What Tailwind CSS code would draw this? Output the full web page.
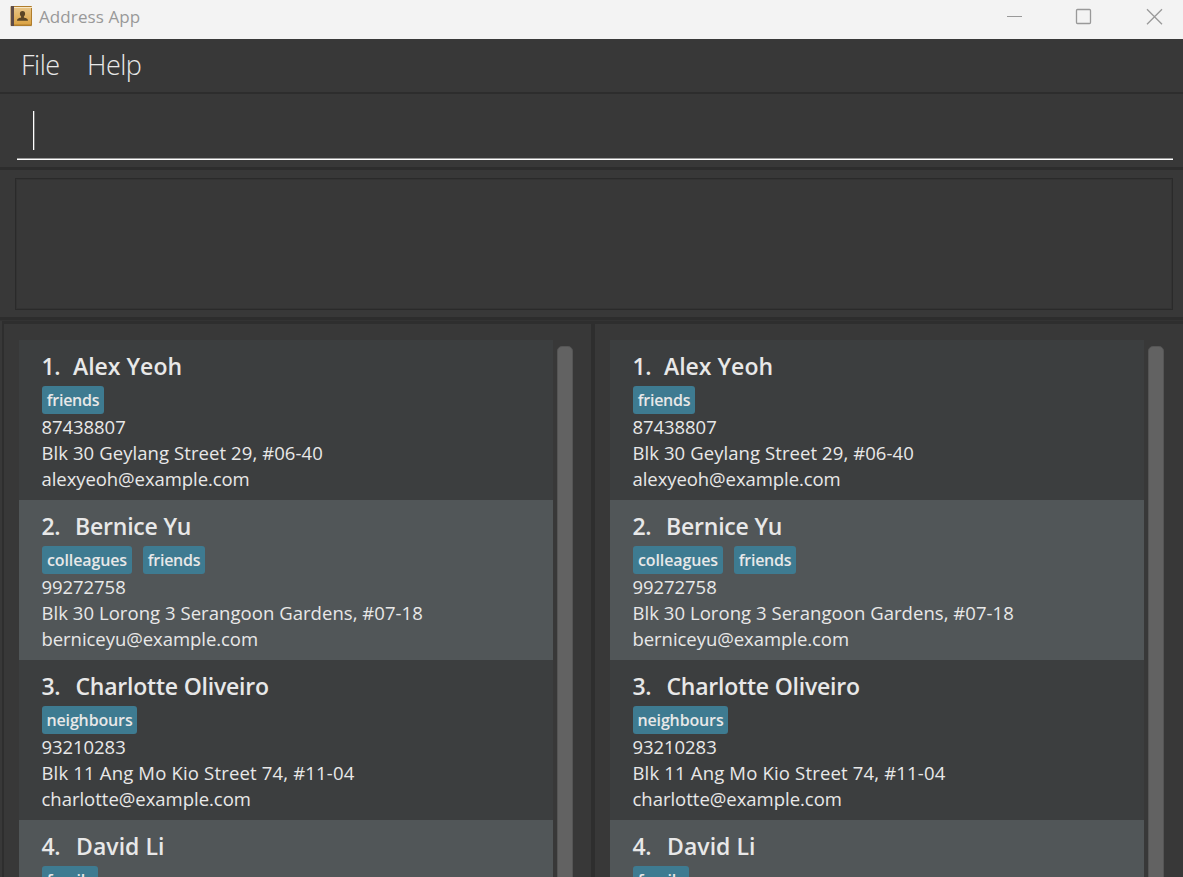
<!DOCTYPE html>
<html lang="en">
<head>
<meta charset="utf-8">
<title>Address App</title>
<script src="https://cdn.jsdelivr.net/npm/@tailwindcss/browser@4"></script>
</head>
<body class="flex h-[877px] w-[1183px] flex-col overflow-hidden bg-[#383838] font-['Open_Sans',sans-serif] text-[#e8e8e8]">

<header class="flex h-[39px] shrink-0 items-start bg-[#f3f3f3] pl-[10px] text-[#999]">
  <svg class="mt-[5px]" width="23" height="22" viewBox="0 0 23 22">
    <defs><linearGradient id="g" x1="0" y1="0" x2="0" y2="1"><stop offset="0" stop-color="#e8c485"/><stop offset="1" stop-color="#dba343"/></linearGradient></defs>
    <rect x="0.5" y="20.5" width="21.5" height="1" fill="#d9d9d9"/>
    <rect x="0.5" y="1" width="21.5" height="20" rx="1" fill="#b07d2c"/>
    <rect x="3" y="2" width="19" height="1" fill="#f7e6c4"/>
    <rect x="4" y="3" width="17" height="16.5" fill="url(#g)"/>
    <path d="M1 1h3v20H1z" fill="#5d4c48"/>
    <path d="M12.5 6c1.8 0 2.7 1.200 2.600 2.900-.1 1.300-.7 2-1.200 2.500v1c1.600.5 4.100.8 4.100 3.300H7c0-2.500 2.500-2.800 4.100-3.300v-1c-.5-.5-1.100-1.200-1.200-2.500C9.800 7.200 10.700 6 12.500 6z" fill="#5b4525"/>
  </svg>
  <span class="ml-[6px] mt-[5px] text-[17px] leading-[23px] tracking-[0.1px]">Address App</span>
  <div class="ml-auto flex">
    <svg width="183" height="34" viewBox="0 0 183 34" fill="none" stroke="#999">
      <path d="M7 16.500h15"/>
      <rect x="76.500" y="9.500" width="14" height="14" rx="1" stroke-width="1.300"/>
      <path d="M147 9.200l15 15M162 9.200l-15 15" stroke-width="1.300"/>
    </svg>
  </div>
</header>

<nav class="flex h-[55px] shrink-0 border-b-2 border-[#2d2d2d] pl-[21px] text-[27px] font-light leading-[51px] tracking-[-0.5px]">
  <span class="w-[66px]">File</span><span>Help</span>
</nav>

<div class="flex h-[73px] shrink-0 flex-col pl-[17px] pr-[10px]">
  <div class="h-[64px] pl-[16px] pt-[17px]"><div class="flex h-[39px]"><div class="w-px bg-white"></div><div class="w-px bg-[#707070]"></div></div></div>
  <div class="h-px shrink-0 bg-[#9b9b9b]"></div><div class="h-px shrink-0 bg-white"></div>
</div>

<div class="h-[153px] shrink-0 border-y-[3px] border-[#2d2d2d] pb-[7px] pl-[15px] pr-[10px] pt-[8px]">
  <div class="h-[132px] border border-[#2a2a2a]"><div class="h-full border border-[#333]"></div></div>
</div>

<main class="flex min-h-0 flex-1 border-t border-[#333] pl-[2px]">
  <section class="flex w-[590px] shrink-0 border-l-2 border-r border-t-[3px] border-[#2e2e2e] pl-[15px] pt-[16px]">
    <div class="list w-[534px] shrink-0"></div>
    <div class="ml-[4px] mt-[6px] h-[600px] w-4 rounded-[5px] border border-[#555] bg-[#626262]"></div>
  </section>
  <section class="flex flex-1 border-l-[3px] border-t-[3px] border-[#2e2e2e] pl-[15px] pt-[16px]">
    <div class="list w-[534px] shrink-0"></div>
    <div class="ml-[4px] mt-[6px] h-[600px] w-4 rounded-[5px] border border-[#555] bg-[#626262]"></div>
  </section>
</main>

<script>
// Each text is paired with its letter spacing in px.
const people = [
  { name: ['Alex Yeoh', 0], indent: 31.5, tags: [['friends', -0.28, 62]],
    lines: [['87438807', -0.06], ['Blk 30 Geylang Street 29, #06-40', 0.08], ['alexyeoh@example.com', -0.07]] },
  { name: ['Bernice Yu', -0.2], indent: 33.5, tags: [['colleagues', -0.12, 90], ['friends', -0.28, 62]],
    lines: [['99272758', -0.06], ['Blk 30 Lorong 3 Serangoon Gardens, #07-18', 0.05], ['berniceyu@example.com', -0.05]] },
  { name: ['Charlotte Oliveiro', -0.22], indent: 34, tags: [['neighbours', -0.14, 95]],
    lines: [['93210283', -0.06], ['Blk 11 Ang Mo Kio Street 74, #11-04', 0.17], ['charlotte@example.com', -0.02]] },
  { name: ['David Li', 0.05], indent: 34.5, tags: [['family', -0.25, 56]], lines: [] },
];
const html = people.map((p, i) => `
  <article class="h-[160px] pl-[22.5px] pt-[10px] ${i % 2 ? 'bg-[#515658]' : 'bg-[#3c3e3f]'}">
    <h2 class="flex h-9 text-[23px] font-semibold leading-8">
      <span class="tracking-[-0.3px]" style="width:${p.indent}px">${i + 1}.</span><span style="letter-spacing:${p.name[1]}px">${p.name[0]}</span>
    </h2>
    <div class="ml-[0.5px] flex h-7 gap-[11px]">${p.tags.map(t => `<span class="whitespace-nowrap rounded-[3px] bg-[#3e7b91] text-center text-[16px] font-semibold leading-7" style="width:${t[2]}px;letter-spacing:${t[1]}px">${t[0]}</span>`).join('')}</div>
    ${p.lines.map(l => `<p class="h-[26px] whitespace-nowrap text-[18.5px] leading-[26px]" style="letter-spacing:${l[1]}px">${l[0]}</p>`).join('')}
  </article>`).join('');
document.querySelectorAll('.list').forEach(el => { el.innerHTML = html; });
</script>
</body>
</html>
